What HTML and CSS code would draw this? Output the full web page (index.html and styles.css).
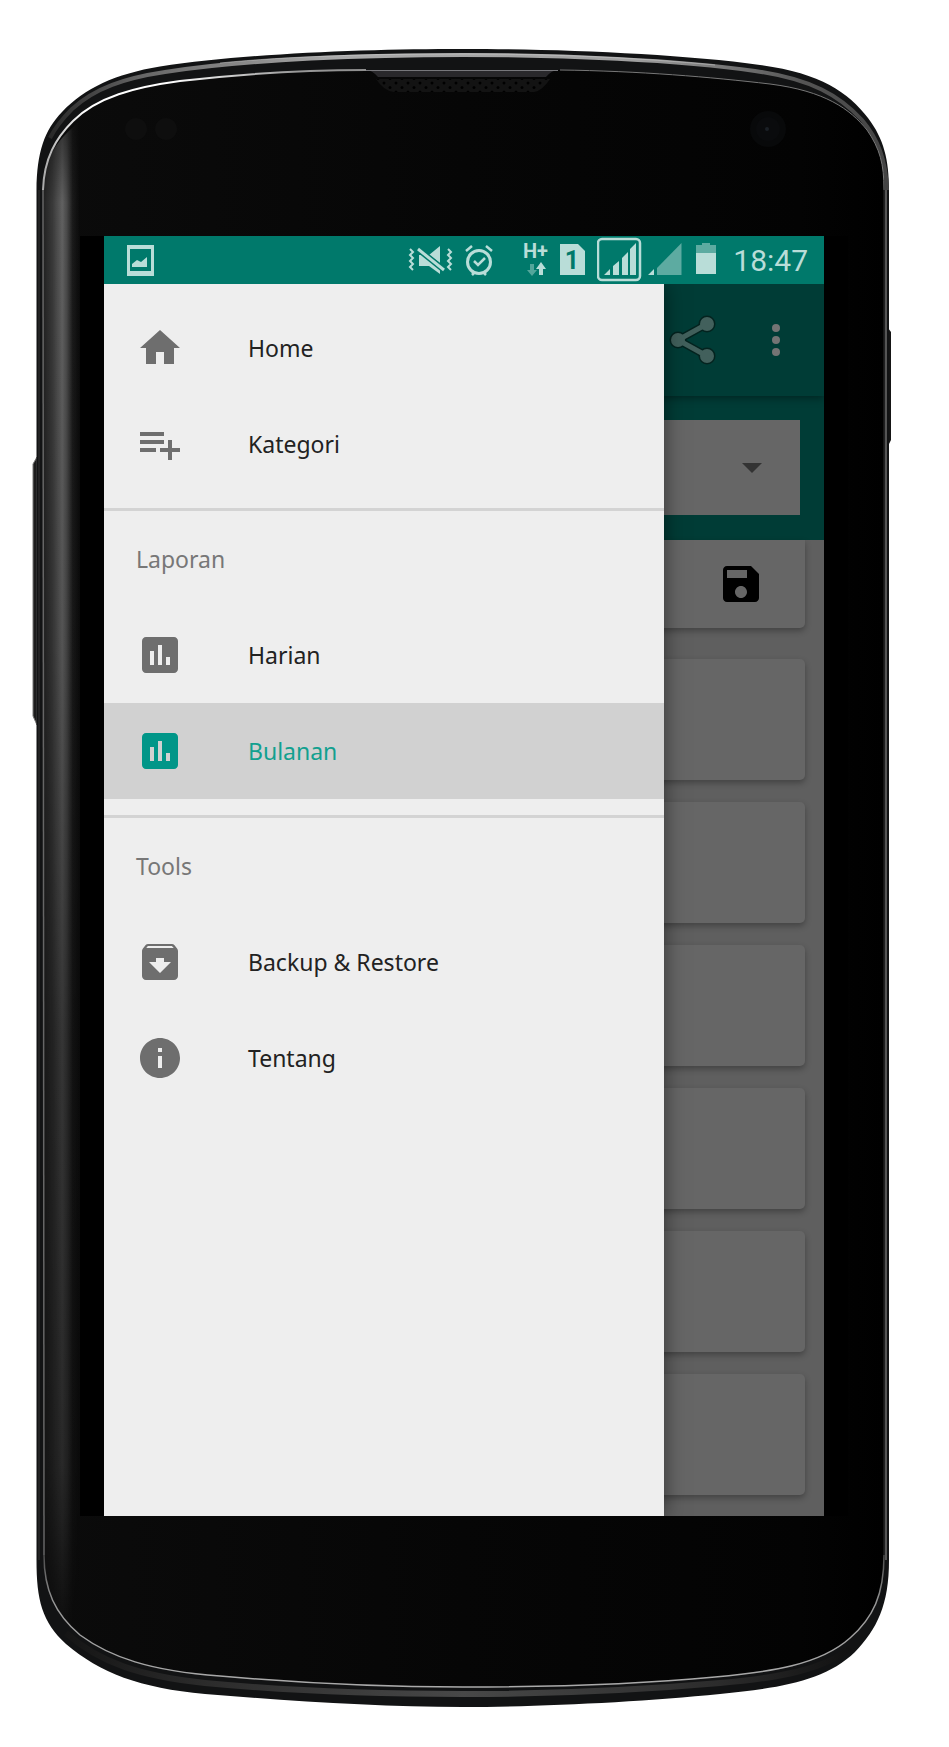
FILE: index.html
```html
<!DOCTYPE html>
<html lang="id">
<head>
<meta charset="utf-8">
<meta name="viewport" content="width=device-width, initial-scale=1">
<title>Laporan Bulanan</title>
<link rel="stylesheet" href="styles.css">
</head>
<body>
<div class="device">
  <svg class="frame" viewBox="0 0 949 1747" preserveAspectRatio="none" aria-hidden="true">
    <defs>
      <linearGradient id="glass" x1="0" x2="1" y1="0" y2="0">
        <stop offset="0" stop-color="#0b0b0b"/><stop offset=".5" stop-color="#060606"/><stop offset=".9" stop-color="#030303"/><stop offset="1" stop-color="#000"/>
      </linearGradient>
      <linearGradient id="side" gradientUnits="userSpaceOnUse" x1="43" x2="80" y1="0" y2="0">
        <stop offset="0" stop-color="#fff" stop-opacity=".1"/><stop offset=".25" stop-color="#fff" stop-opacity=".2"/><stop offset=".52" stop-color="#fff" stop-opacity=".38"/><stop offset=".64" stop-color="#fff" stop-opacity=".28"/><stop offset=".8" stop-color="#fff" stop-opacity=".07"/><stop offset="1" stop-color="#fff" stop-opacity="0"/>
      </linearGradient>
      <linearGradient id="fade" gradientUnits="userSpaceOnUse" x1="0" x2="0" y1="110" y2="1650">
        <stop offset="0" stop-color="#555"/><stop offset=".06" stop-color="#eee"/><stop offset=".35" stop-color="#ccc"/><stop offset=".6" stop-color="#777"/><stop offset=".88" stop-color="#555"/><stop offset="1" stop-color="#000"/>
      </linearGradient>
      <mask id="sideMask" maskUnits="userSpaceOnUse" x="0" y="0" width="949" height="1747"><rect width="949" height="1747" fill="url(#fade)"/></mask>
      <linearGradient id="rimTop" gradientUnits="userSpaceOnUse" x1="40" x2="886" y1="0" y2="0">
        <stop offset="0" stop-color="#222"/><stop offset=".12" stop-color="#666"/><stop offset=".35" stop-color="#aaa"/><stop offset=".7" stop-color="#a0a0a0"/><stop offset=".9" stop-color="#555"/><stop offset="1" stop-color="#444"/>
      </linearGradient>
      <linearGradient id="lineTop" gradientUnits="userSpaceOnUse" x1="43" x2="883" y1="0" y2="0">
        <stop offset="0" stop-color="#aaa"/><stop offset=".05" stop-color="#fff"/><stop offset=".15" stop-color="#fff"/><stop offset=".3" stop-color="#999"/><stop offset=".7" stop-color="#666"/><stop offset="1" stop-color="#777"/>
      </linearGradient>
      <linearGradient id="lineBottom" gradientUnits="userSpaceOnUse" x1="0" x2="0" y1="1550" y2="1687">
        <stop offset="0" stop-color="#444"/><stop offset=".4" stop-color="#999"/><stop offset="1" stop-color="#aaa"/>
      </linearGradient>
      <linearGradient id="rimBottom" gradientUnits="userSpaceOnUse" x1="40" x2="886" y1="0" y2="0">
        <stop offset="0" stop-color="#111"/><stop offset=".2" stop-color="#2c2c2c"/><stop offset=".5" stop-color="#484848"/><stop offset=".8" stop-color="#2c2c2c"/><stop offset="1" stop-color="#0a0a0a"/>
      </linearGradient>
      <pattern id="holes" width="12" height="9" patternUnits="userSpaceOnUse" x="380" y="80">
        <rect width="12" height="9" fill="#131313"/><circle cx="4" cy="3" r="1.500" fill="#000"/><circle cx="10" cy="7.500" r="1.500" fill="#000"/>
      </pattern>
    </defs>

    <path fill="#1c1c1c" stroke="#777" stroke-width="1" d="M37 457 L33 464 V716 L37 725Z"/>
    <path fill="#151515" d="M888 328 L891 332 V440 L888 446Z"/>

    <path fill="#121314" d="M36.500 190 C37 152 44 131 62 112 C85 88 115 74 160 66.500 C250 53 370 49 463 49 C560 49 680 54 760 65 C820 73 848 92 868 118 C884 139 889 160 889 190 V1560 C889 1605 877 1629 855 1652 C825 1681 780 1688 720 1694 C640 1702 540 1707 463 1707 C380 1707 290 1701 205 1694 C140 1688 100 1673 66 1644 C42 1622 36.500 1600 36.500 1560Z"/>
    <path fill="none" stroke="url(#rimTop)" stroke-width="4" d="M50 138 C55 128 62 119 72 109 C95 88 125 78 165 72 C250 59 370 55 463 55 C560 55 680 60 755 71 C812 79 840 96 862 120 C878 139 886 160 887 190"/>
    <path fill="none" stroke="#d0d0d0" stroke-opacity=".5" d="M220 63 C290 56 370 54 463 54 C560 54 640 58 715 65"/>
    <path fill="none" stroke="#555" stroke-width="2" d="M886 190 V1560"/>
    <path fill="none" stroke="#333" stroke-width="1" d="M39 190 V1560"/>
    <path fill="none" stroke="url(#rimBottom)" stroke-width="6" d="M66 1633 C100 1663 140 1676 205 1683 C290 1691 380 1694 463 1694 C540 1694 640 1690 720 1683 C780 1678 825 1669 850 1648"/>

    <path fill="url(#glass)" d="M43 190 C44 158 56 138 73 121 C97 97 135 87 180 81 C240 74 300 70 366 70 H560 C640 71 710 77 770 84 C825 91 850 109 867 130 C880 149 884 164 884 190 V1555 C884 1595 873 1618 850 1638 C820 1665 770 1672 715 1677 C640 1684 550 1687 463 1687 C380 1687 300 1683 220 1676 C150 1671 110 1657 80 1635 C55 1614 44 1590 44 1555Z"/>
    <path mask="url(#sideMask)" fill="url(#side)" d="M43 190 C44 158 56 143 73 127 L80 120 V1635 C55 1614 44 1590 44 1555Z"/>
    <path fill="none" stroke="url(#lineTop)" stroke-width="2" d="M43 190 C44 158 56 138 73 121 C97 97 135 87 180 81 C240 74 300 70 366 70"/>
    <path fill="none" stroke="#777" stroke-width="1" d="M560 70 C640 71 710 77 770 84 C825 91 850 109 867 130 C880 149 884 164 884 190"/>
    <path fill="none" stroke="#666" stroke-width="1.500" d="M43 190 L44 1555"/>
    <path fill="none" stroke="#2d2d2d" stroke-width="1" d="M884 190 V1555"/>
    <path fill="none" stroke="url(#lineBottom)" stroke-width="1.500" d="M884 1555 C884 1595 873 1618 850 1638 C820 1665 770 1672 715 1677 C640 1684 550 1687 463 1687 C380 1687 300 1683 220 1676 C150 1671 110 1657 80 1635 C55 1614 44 1590 44 1555"/>

    <path fill="#29282b" d="M366 70 H558 Q552 70 546 77 H378 Q372 70 366 70Z"/>
    <path fill="none" stroke="#77777b" d="M366 70.500 H558"/>
    <path fill="url(#holes)" d="M376 79 H550 Q542 91 534 92 H394 Q384 91 376 79Z"/>
    <circle cx="136" cy="129" r="11" fill="#0e0e0e"/>
    <circle cx="166" cy="129" r="11" fill="#0e0e0e"/>
    <circle cx="768" cy="129" r="18" fill="#08090a"/>
    <circle cx="768" cy="129" r="12" fill="#0a0b0d"/>
    <circle cx="767" cy="129" r="2" fill="#1b2026"/>
  </svg>

  <div class="screen">
    <header class="status">
      <svg class="status-icon status-photo" viewBox="0 0 28 48" width="28" height="48" aria-hidden="true">
        <path fill="currentColor" fill-rule="evenodd" d="M1 9h27v31H1z M4 13v22h21V13z"/>
        <path fill="currentColor" d="M6 31V28l5-4 4 2 6-5v10z"/>
      </svg>
      <svg class="status-icon" viewBox="0 0 45 48" width="45" height="48" aria-hidden="true">
        <path fill="none" stroke="currentColor" stroke-width="2" d="M2 13l3 3-3 3 3 3-3 3 3 3-3 3 3 3M40 13l3 3-3 3 3 3-3 3 3 3-3 3 3 3"/>
        <path fill="currentColor" d="M21 19l11-9v17zM11 19h3l18 14v5l-11-8H11z"/>
        <path stroke="#00796b" stroke-width="6" d="M10 13l26 21"/>
        <path stroke="currentColor" stroke-width="3" d="M10 13l26 21"/>
      </svg>
      <svg class="status-icon" viewBox="0 0 28 48" width="28" height="48" aria-hidden="true">
        <g fill="none" stroke="currentColor" stroke-width="3"><circle cx="14" cy="26" r="11.500"/><path stroke-width="2.500" d="M9 25l4 4 7-7M1 15l6-5M27 15l-6-5M7 39l3-3M21 39l-3-3"/></g>
      </svg>
      <svg class="status-icon status-data" viewBox="0 0 24 48" width="24" height="48" role="img" aria-label="H+">
        <text class="net-text" x="-1" y="22">H+</text>
        <path fill="currentColor" opacity=".45" d="M6 28h4v6h3l-5 6-5-6h3z"/>
        <path fill="currentColor" d="M15 39h4v-6h3l-5-7-5 7h3z"/>
      </svg>
      <svg class="status-icon" viewBox="0 0 25 48" width="25" height="48" role="img" aria-label="SIM 1">
        <path fill="currentColor" d="M0 8h18l7 7v24H0z"/>
        <text class="sim-text" x="12" y="33" text-anchor="middle">1</text>
      </svg>
      <svg class="status-icon" viewBox="0 0 85 48" width="85" height="48" aria-hidden="true">
        <rect x="1" y="3" width="42" height="41" rx="4" fill="none" stroke="currentColor" stroke-width="2.500"/>
        <path fill="currentColor" d="M7 39l6-6v6zM16 30l6-5v14h-6zM25 22l6-6v23h-6zM33 13l6-6v32h-6zM51 39l6-6v6z"/>
        <path fill="currentColor" opacity=".5" d="M60 32L84.500 7v32H60z"/>
      </svg>
      <svg class="status-icon" viewBox="0 0 24 48" width="24" height="48" aria-hidden="true">
        <path fill="currentColor" opacity=".5" d="M2 9h6V7h8v2h6v8H2z"/><path fill="currentColor" d="M2 17h20v21H2z"/>
      </svg>
      <time class="clock">18:47</time>
    </header>

    <div class="app">
      <main class="page">
        <div class="toolbar">
          <button class="icon-button" type="button" aria-label="Bagikan">
            <svg viewBox="0 0 48 48" width="48" height="48" aria-hidden="true">
              <g stroke="#04231f" stroke-width="8" fill="#04231f"><path d="M38 8L9 24l29 16" fill="none"/><circle cx="38" cy="8" r="4.500"/><circle cx="9" cy="24" r="4.500"/><circle cx="38" cy="40" r="4.500"/></g>
              <path d="M38 8L9 24l29 16" fill="none" stroke="#42605c" stroke-width="5"/>
              <g fill="#42605c"><circle cx="38" cy="8" r="7"/><circle cx="9" cy="24" r="7"/><circle cx="38" cy="40" r="7"/></g>
            </svg>
          </button>
          <button class="icon-button" type="button" aria-label="Menu lainnya">
            <svg viewBox="0 0 48 48" width="48" height="48" aria-hidden="true"><g fill="#747474"><circle cx="24" cy="12" r="4"/><circle cx="24" cy="24" r="4"/><circle cx="24" cy="36" r="4"/></g></svg>
          </button>
        </div>
        <div class="filter">
          <select class="period" aria-label="Periode"><option></option></select>
          <svg class="caret" viewBox="0 0 20 10" width="20" height="10" aria-hidden="true"><path fill="#333" d="M0 0h20L10 10z"/></svg>
        </div>
        <section class="summary">
          <button class="icon-button" type="button" aria-label="Simpan">
            <svg viewBox="0 0 24 24" width="48" height="48" aria-hidden="true"><path d="M17 3H5c-1.110 0-2 .9-2 2v14c0 1.100.89 2 2 2h14c1.100 0 2-.9 2-2V7l-4-4zm-5 16c-1.660 0-3-1.340-3-3s1.340-3 3-3 3 1.340 3 3-1.340 3-3 3zm3-10H5V5h10v4z"/></svg>
          </button>
        </section>
        <div class="cards">
          <article class="card"></article>
          <article class="card"></article>
          <article class="card"></article>
          <article class="card"></article>
          <article class="card"></article>
          <article class="card"></article>
        </div>
      </main>

      <nav class="drawer" aria-label="Menu utama">
        <a class="item" href="#home"><svg class="item-icon" viewBox="0 0 24 24" aria-hidden="true"><path d="M10 20v-6h4v6h5v-8h3L12 3 2 12h3v8z"/></svg><span>Home</span></a>
        <a class="item" href="#kategori"><svg class="item-icon" viewBox="0 0 24 24" aria-hidden="true"><path d="M14 10H2v2h12v-2zm0-4H2v2h12V6zm4 8v-4h-2v4h-4v2h4v4h2v-4h4v-2h-4zM2 16h8v-2H2v2z"/></svg><span>Kategori</span></a>
        <h2 class="group">Laporan</h2>
        <a class="item" href="#harian"><svg class="item-icon" viewBox="0 0 24 24" aria-hidden="true"><path d="M19 3H5c-1.100 0-2 .9-2 2v14c0 1.100.9 2 2 2h14c1.100 0 2-.9 2-2V5c0-1.100-.9-2-2-2zM9 17H7v-7h2v7zm4 0h-2V7h2v10zm4 0h-2v-4h2v4z"/></svg><span>Harian</span></a>
        <a class="item item-active" href="#bulanan" aria-current="page"><svg class="item-icon" viewBox="0 0 24 24" aria-hidden="true"><path d="M19 3H5c-1.100 0-2 .9-2 2v14c0 1.100.9 2 2 2h14c1.100 0 2-.9 2-2V5c0-1.100-.9-2-2-2zM9 17H7v-7h2v7zm4 0h-2V7h2v10zm4 0h-2v-4h2v4z"/></svg><span>Bulanan</span></a>
        <h2 class="group">Tools</h2>
        <a class="item" href="#backup"><svg class="item-icon" viewBox="0 0 24 24" aria-hidden="true"><path d="M20.540 5.230l-1.390-1.680C18.880 3.210 18.470 3 18 3H6c-.47 0-.88.21-1.160.55L3.460 5.230C3.170 5.570 3 6.020 3 6.500V19c0 1.100.9 2 2 2h14c1.100 0 2-.9 2-2V6.500c0-.48-.17-.93-.46-1.270zM12 17.500L6.500 12H10v-2h4v2h3.500L12 17.500zM5.120 5l.81-1h12l.94 1H5.120z"/></svg><span>Backup &amp; Restore</span></a>
        <a class="item" href="#tentang"><svg class="item-icon" viewBox="0 0 24 24" aria-hidden="true"><path d="M12 2C6.480 2 2 6.480 2 12s4.480 10 10 10 10-4.480 10-10S17.520 2 12 2zm1 15h-2v-6h2v6zm0-8h-2V7h2v2z"/></svg><span>Tentang</span></a>
      </nav>
    </div>
  </div>
</div>
</body>
</html>
```
FILE: styles.css
```css
* {
  box-sizing: border-box;
}

body {
  margin: 0;
  background: #fff;
  font-family: "Noto Sans", "Open Sans", sans-serif;
}

.device {
  position: relative;
  padding: 236px 101px 231px 80px;
}

.frame {
  position: absolute;
  inset: 0;
  width: 100%;
  height: 100%;
}

.screen {
  position: relative;
  border: solid #000;
  border-width: 0 24px;
}

/* Status bar */
.status {
  display: flex;
  align-items: center;
  gap: 12px;
  height: 48px;
  padding: 0 16px 0 22px;
  background: #00796b;
  color: #b9ddd8;
}

.status-icon {
  flex: none;
}

.status-photo {
  margin-right: auto;
}

.status-data {
  margin-left: 19px;
  overflow: visible;
}

.net-text {
  font: 700 20px Roboto, sans-serif;
  fill: currentColor;
}

.sim-text {
  font: 700 25px Roboto, sans-serif;
  fill: #00796b;
}

.clock {
  margin-left: 3px;
  padding-top: 2px;
  font: 400 30px/48px Roboto, sans-serif;
}

/* The page and the drawer share one cell; the drawer lies on top */
.app {
  display: grid;
  grid-template-columns: 7fr 2fr;
  overflow: hidden;
}

.page {
  grid-area: 1 / 1 / 2 / 3;
  background: #5f5f5f;
}

.toolbar {
  position: relative;
  display: flex;
  justify-content: flex-end;
  align-items: center;
  gap: 35px;
  height: 112px;
  padding: 0 24px;
  background: #003c36;
  box-shadow: 0 2px 8px rgba(0, 0, 0, 0.4);
}

.icon-button {
  display: block;
  width: 48px;
  height: 48px;
  padding: 0;
  border: 0;
  background: none;
}

.icon-button svg {
  display: block;
  overflow: visible;
}

.filter {
  display: grid;
  align-items: center;
  padding: 24px 24px 25px;
  background: #003c36;
}

.period {
  grid-area: 1 / 1;
  width: 100%;
  height: 95px;
  border: 0;
  border-radius: 0;
  background: #666;
  appearance: none;
}

.caret {
  grid-area: 1 / 1;
  justify-self: end;
  margin-right: 38px;
  pointer-events: none;
}

.summary,
.card {
  background: #666;
  box-shadow: 0 3px 6px rgba(0, 0, 0, 0.3);
}

.summary {
  display: flex;
  justify-content: flex-end;
  align-items: center;
  height: 88px;
  margin: 0 19px;
  padding-right: 40px;
  border-radius: 0 0 5px 5px;
}

.cards {
  display: grid;
  gap: 22px;
  padding: 31px 19px 21px;
}

.card {
  height: 121px;
  border-radius: 5px;
}

/* Navigation drawer */
.drawer {
  position: relative;
  grid-area: 1 / 1;
  padding-top: 16px;
  background: #eee;
  box-shadow: 0 0 20px rgba(0, 0, 0, 0.5);
}

.item {
  display: flex;
  align-items: center;
  gap: 64px;
  height: 96px;
  padding: 0 32px;
  color: #222;
  font-size: 23px;
  text-decoration: none;
}

.item-icon {
  flex: none;
  width: 48px;
  height: 48px;
  fill: #6e6e6e;
}

.item-active {
  background: #d1d1d1;
  color: #12a08f;
}

.item-active .item-icon {
  fill: #009688;
}

.group {
  margin: 16px 0 0;
  padding: 0 32px;
  border-top: 3px solid #d3d3d3;
  color: #777;
  font-size: 23px;
  font-weight: 400;
  line-height: 96px;
}
```
